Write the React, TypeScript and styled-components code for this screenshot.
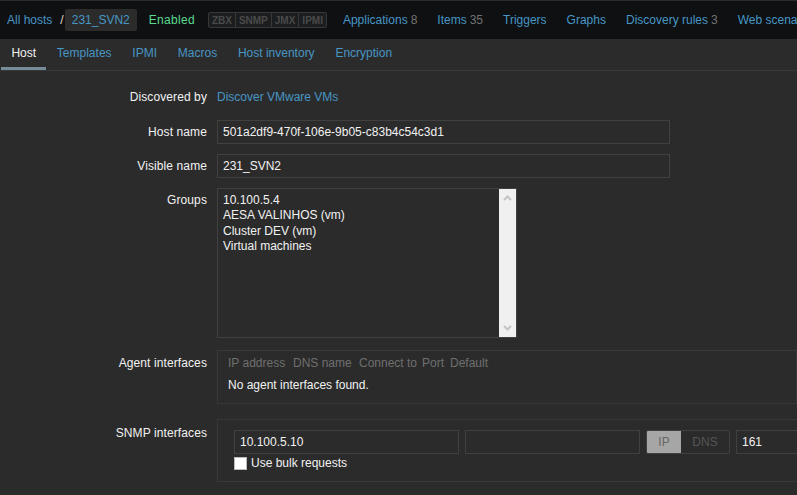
import React from 'react';
import styled, { createGlobalStyle } from 'styled-components';

// Page-wide defaults (Zabbix dark theme)
const GlobalStyle = createGlobalStyle`
  html, body {
    margin: 0;
    padding: 0;
    background: #2b2b2b;
    overflow: hidden;
  }
  body {
    font-family: "Liberation Sans", Arial, sans-serif;
    font-size: 12px;
    color: #f2f2f2;
  }
`;

const Page = styled.div`
  width: 797px;
  height: 495px;
  overflow: hidden;
  background: #2b2b2b;
`;

// Header with breadcrumbs and navigation
const TopBar = styled.header`
  display: flex;
  align-items: center;
  height: 38px;
  border-top: 1px solid #2b2b2b;
  background: #0e1012;
  padding-left: 7px;
  white-space: nowrap;
`;

const Link = styled.a`
  color: #4796c4;
  text-decoration: none;
  cursor: pointer;
`;

const Separator = styled.span`
  color: #e8d9c8;
  padding: 0 1px 0 8px;
`;

const CurrentHost = styled.span`
  display: inline-block;
  height: 22px;
  line-height: 22px;
  padding: 0 7px;
  background: #2b2b2b;
  border-radius: 2px;
  color: #4796c4;
`;

const Status = styled.span`
  color: #59db8f;
  margin-left: 12px;
  letter-spacing: 0.3px;
`;

const Availability = styled.div`
  display: flex;
  margin-left: 13px;
  height: 16px;
  border: 1px solid #383838;
  border-radius: 2px;
  background: #1b1d1f;
  box-sizing: border-box;
`;

const AvailCell = styled.span`
  display: flex;
  align-items: center;
  padding: 0 3px;
  font-size: 10px;
  font-weight: bold;
  color: #4a4a4a;
  & + & {
    border-left: 1px solid #383838;
  }
`;

const Nav = styled.nav`
  display: flex;
  margin-left: 6px;
`;

const NavItem = styled(Link)`
  padding: 0 10px;
`;

const Count = styled.span`
  color: #737373;
  margin-left: 3px;
`;

// Form tabs
const TabBar = styled.div`
  display: flex;
  height: 31px;
  padding-left: 1px;
  border-bottom: 1px solid #383838;
`;

const Tab = styled.a<{ $active?: boolean }>`
  display: flex;
  align-items: center;
  height: 31px;
  box-sizing: border-box;
  padding: 0 10.4px;
  border-bottom: 3px solid ${p => (p.$active ? '#768d99' : 'transparent')};
  color: ${p => (p.$active ? '#f2f2f2' : '#4796c4')};
  cursor: pointer;
`;

// Form layout
const Form = styled.div`
  padding-top: 14px;
`;

const Row = styled.div<{ $gap?: number }>`
  display: grid;
  grid-template-columns: 207px 1fr;
  column-gap: 10px;
  margin-bottom: ${p => p.$gap ?? 10}px;
`;

const Label = styled.label<{ $drop?: number }>`
  text-align: right;
  line-height: 24px;
  padding-top: ${p => p.$drop ?? 0}px;
  white-space: nowrap;
  letter-spacing: 0.1px;
`;

const Field = styled.div`
  display: flex;
  align-items: flex-start;
  line-height: 24px;
  min-width: 0;
`;

const TextInput = styled.div<{ $width: number }>`
  width: ${p => p.$width}px;
  height: 24px;
  box-sizing: border-box;
  border: 1px solid #404040;
  background: #2b2b2b;
  padding: 0 5px;
  line-height: 22px;
  color: #f2f2f2;
  white-space: nowrap;
  overflow: hidden;
  flex-shrink: 0;
`;

const ListBox = styled.div`
  display: flex;
  width: 300px;
  height: 150px;
  box-sizing: border-box;
  border: 1px solid #404040;
`;

const ListItems = styled.ul`
  flex: 1;
  list-style: none;
  margin: 0;
  padding: 4px 5px;
  line-height: 15.3px;
`;

const Scrollbar = styled.div`
  width: 17px;
  background: #f0f0f0;
  display: flex;
  flex-direction: column;
  justify-content: space-between;
  align-items: center;
  padding: 6px 0;
`;

const InterfaceBox = styled.div`
  width: 640px;
  box-sizing: border-box;
  border: 1px solid #383838;
  line-height: 17px;
`;

const AgentBox = styled(InterfaceBox)`
  padding: 4px 10px 9px;
`;

const HeaderRow = styled.div`
  display: flex;
  color: #6f6f6f;
`;

const HeaderCell = styled.span<{ $w?: number }>`
  width: ${p => (p.$w ? `${p.$w}px` : 'auto')};
  flex-shrink: 0;
`;

const EmptyNote = styled.div`
  margin-top: 5px;
`;

const SnmpBox = styled(InterfaceBox)`
  padding: 10px 16px 11px;
`;

const InputLine = styled.div`
  display: flex;
  gap: 6px;
`;

const Toggle = styled.div`
  display: flex;
  height: 24px;
  box-sizing: border-box;
  border: 1px solid #404040;
  border-radius: 2px;
  overflow: hidden;
  flex-shrink: 0;
`;

const ToggleOption = styled.span<{ $on?: boolean; $w: number }>`
  width: ${p => p.$w}px;
  line-height: 22px;
  text-align: center;
  background: ${p => (p.$on ? '#a6a6a6' : 'transparent')};
  color: ${p => (p.$on ? '#666666' : '#555555')};
`;

const CheckLine = styled.label`
  display: flex;
  align-items: center;
  margin-top: 3px;
  line-height: 13px;
`;

const Box = styled.span`
  width: 13px;
  height: 13px;
  box-sizing: border-box;
  background: #ffffff;
  border: 1px solid #bcbcbc;
  margin-right: 4px;
`;

const Chevron: React.FC<{ down?: boolean }> = ({ down }) => (
  <svg width="9" height="6" viewBox="0 0 9 6">
    <polyline
      points={down ? '1,1 4.5,4.5 8,1' : '1,5 4.5,1.5 8,5'}
      fill="none"
      stroke="#c4c4c4"
      strokeWidth="2"
    />
  </svg>
);

const navItems = [
  { label: 'Applications', count: '8' },
  { label: 'Items', count: '35' },
  { label: 'Triggers' },
  { label: 'Graphs' },
  { label: 'Discovery rules', count: '3' },
  { label: 'Web scenarios' },
];

const tabs = ['Host', 'Templates', 'IPMI', 'Macros', 'Host inventory', 'Encryption'];

const groups = ['10.100.5.4', 'AESA VALINHOS (vm)', 'Cluster DEV (vm)', 'Virtual machines'];

const App: React.FC = () => (
  <Page>
    <GlobalStyle />
    <TopBar>
      <Link>All hosts</Link>
      <Separator>/</Separator>
      <CurrentHost>231_SVN2</CurrentHost>
      <Status>Enabled</Status>
      <Availability>
        <AvailCell>ZBX</AvailCell>
        <AvailCell>SNMP</AvailCell>
        <AvailCell>JMX</AvailCell>
        <AvailCell>IPMI</AvailCell>
      </Availability>
      <Nav>
        {navItems.map(item => (
          <NavItem key={item.label}>
            {item.label}
            {item.count && <Count>{item.count}</Count>}
          </NavItem>
        ))}
      </Nav>
    </TopBar>

    <TabBar>
      {tabs.map((t, i) => (
        <Tab key={t} $active={i === 0}>{t}</Tab>
      ))}
    </TabBar>

    <Form>
      <Row $gap={11}>
        <Label>Discovered by</Label>
        <Field>
          <Link>Discover VMware VMs</Link>
        </Field>
      </Row>
      <Row>
        <Label>Host name</Label>
        <Field>
          <TextInput $width={453}>501a2df9-470f-106e-9b05-c83b4c54c3d1</TextInput>
        </Field>
      </Row>
      <Row>
        <Label>Visible name</Label>
        <Field>
          <TextInput $width={453}>231_SVN2</TextInput>
        </Field>
      </Row>
      <Row $gap={12}>
        <Label>Groups</Label>
        <Field>
          <ListBox>
            <ListItems>
              {groups.map(g => (
                <li key={g}>{g}</li>
              ))}
            </ListItems>
            <Scrollbar>
              <Chevron />
              <Chevron down />
            </Scrollbar>
          </ListBox>
        </Field>
      </Row>
      <Row $gap={15}>
        <Label $drop={1}>Agent interfaces</Label>
        <Field>
          <AgentBox>
            <HeaderRow>
              <HeaderCell $w={65}>IP address</HeaderCell>
              <HeaderCell $w={66}>DNS name</HeaderCell>
              <HeaderCell $w={63}>Connect to</HeaderCell>
              <HeaderCell $w={28}>Port</HeaderCell>
              <HeaderCell>Default</HeaderCell>
            </HeaderRow>
            <EmptyNote>No agent interfaces found.</EmptyNote>
          </AgentBox>
        </Field>
      </Row>
      <Row>
        <Label $drop={2}>SNMP interfaces</Label>
        <Field>
          <SnmpBox>
            <InputLine>
              <TextInput $width={225}>10.100.5.10</TextInput>
              <TextInput $width={175} />
              <Toggle>
                <ToggleOption $on $w={34}>IP</ToggleOption>
                <ToggleOption $w={48}>DNS</ToggleOption>
              </Toggle>
              <TextInput $width={75}>161</TextInput>
            </InputLine>
            <CheckLine>
              <Box />
              Use bulk requests
            </CheckLine>
          </SnmpBox>
        </Field>
      </Row>
    </Form>
  </Page>
);

export default App;
